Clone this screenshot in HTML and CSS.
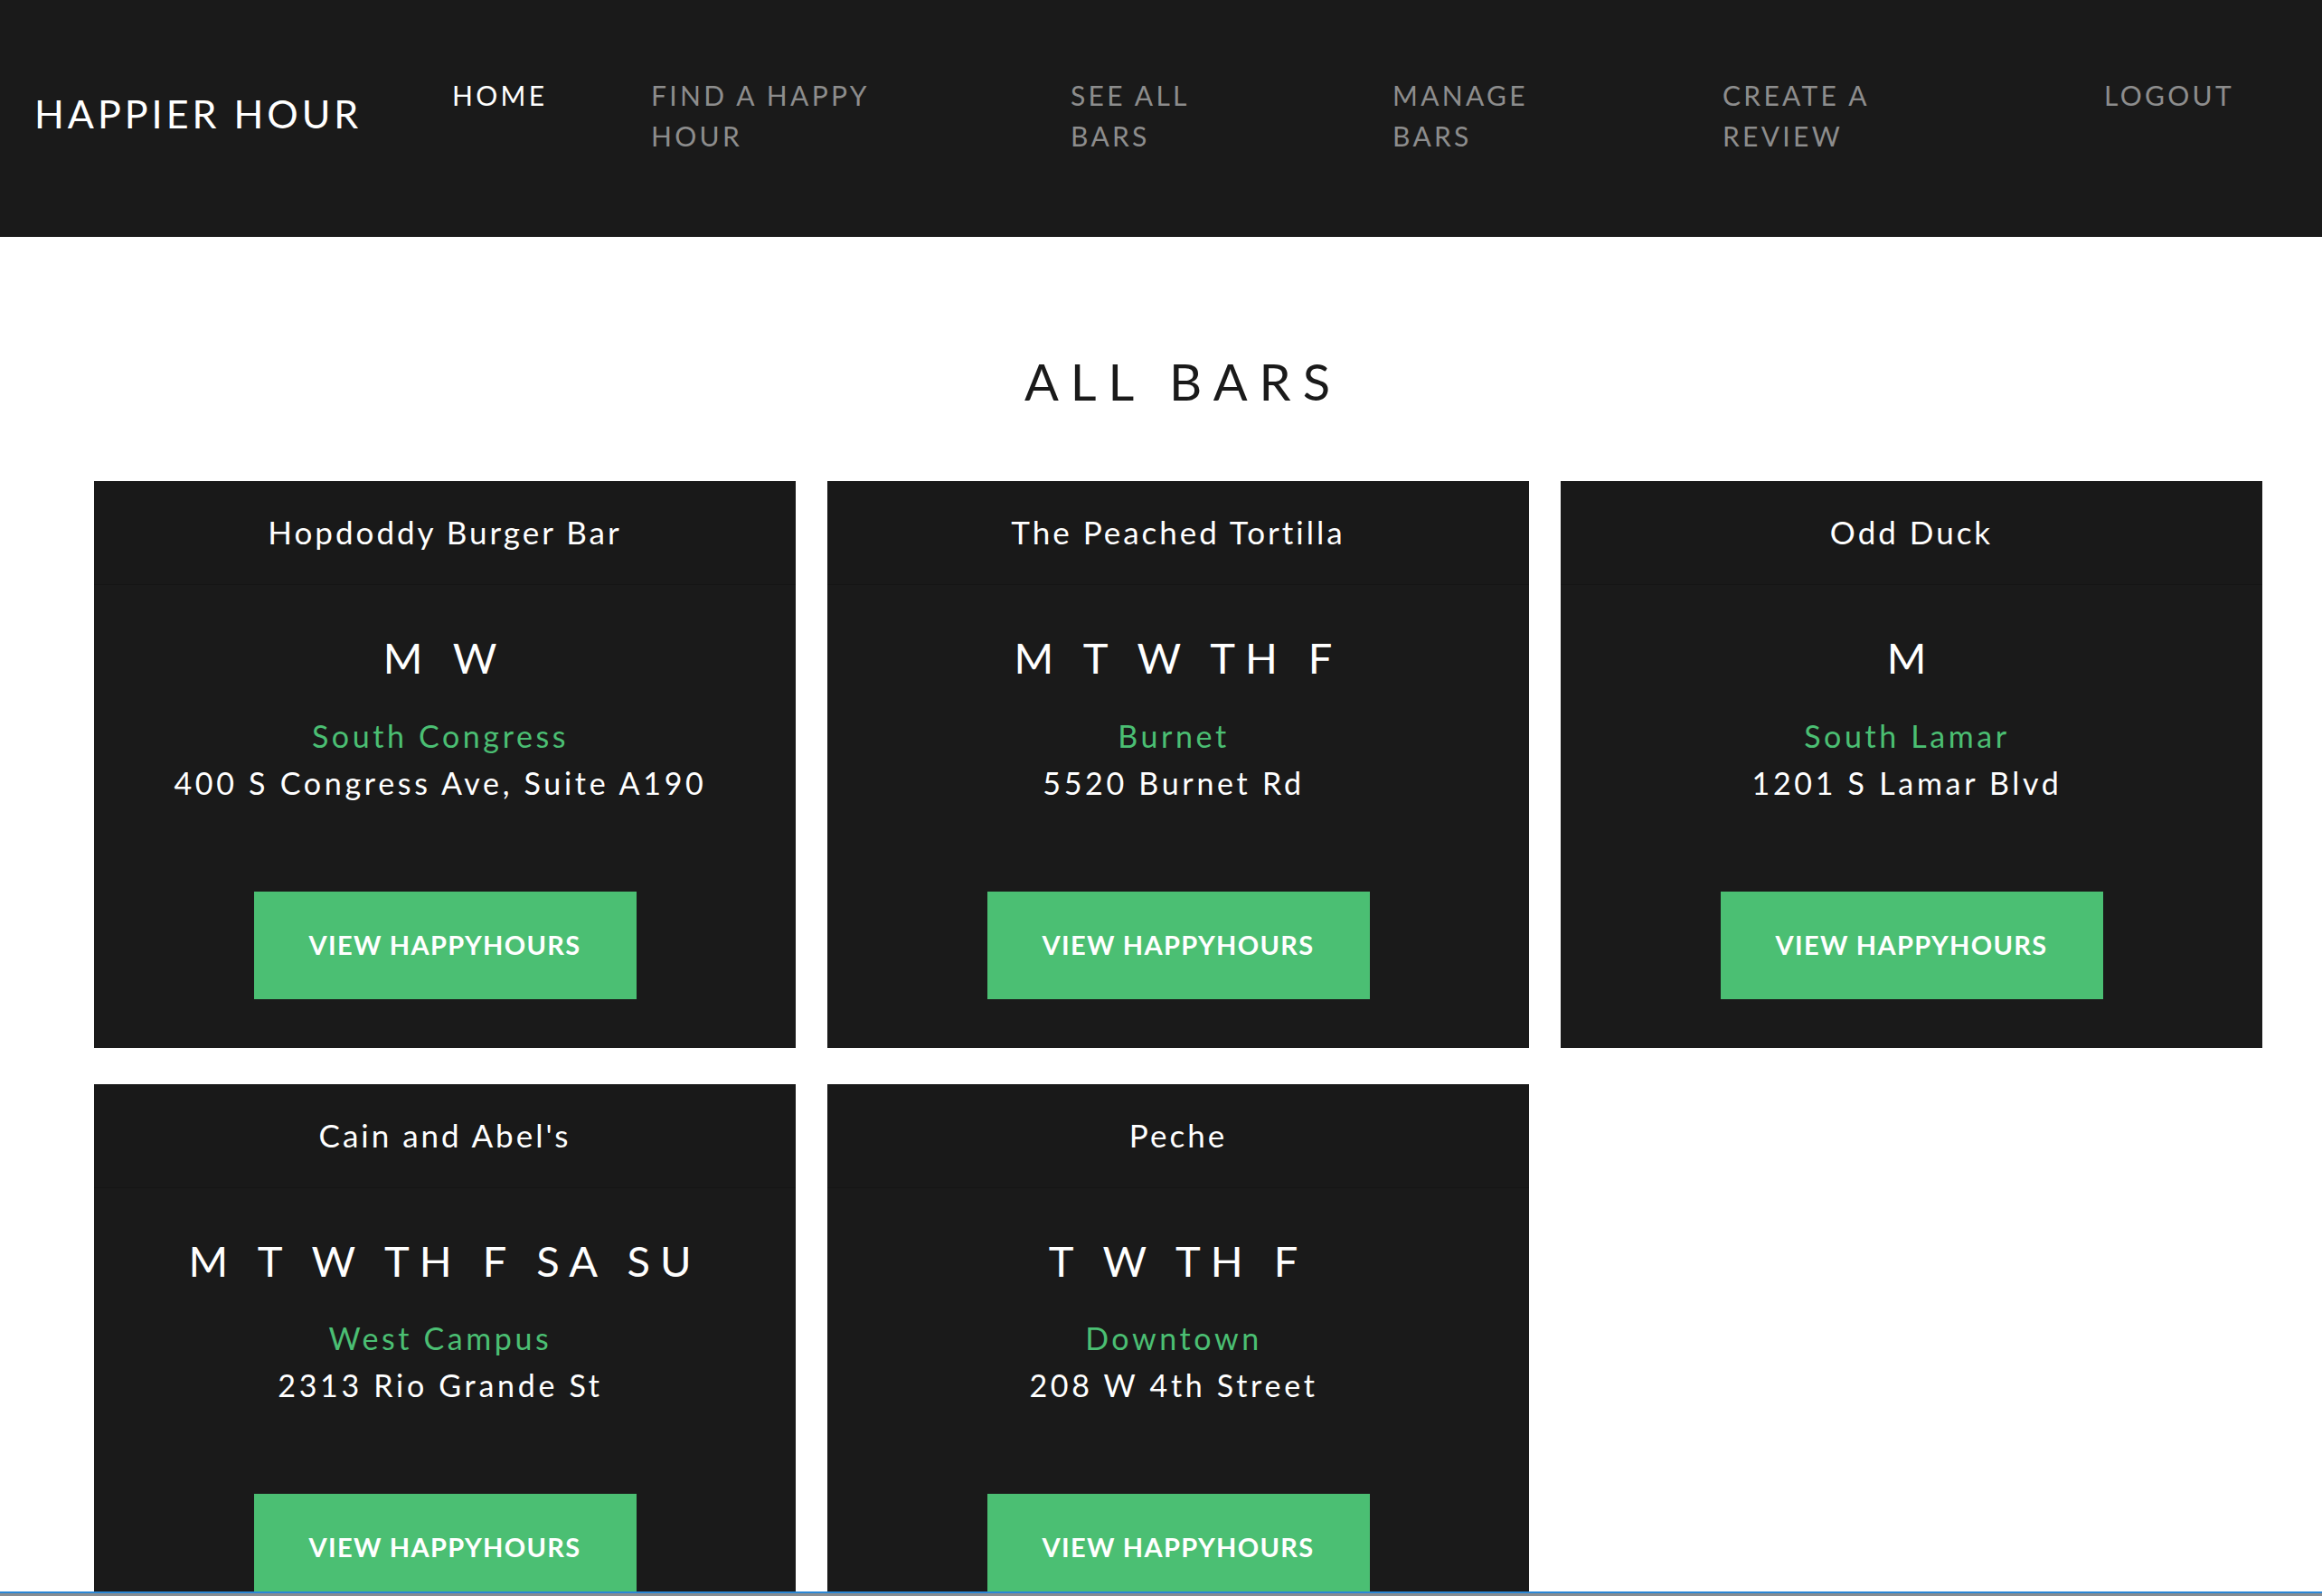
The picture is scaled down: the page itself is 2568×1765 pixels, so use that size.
FILE: index.html
```html
<!DOCTYPE html>
<html lang="en">
<head>
<meta charset="utf-8">
<title>Happier Hour - All Bars</title>
<link rel="stylesheet" href="styles.css">
</head>
<body>
<header class="navbar">
  <a class="brand" href="#">HAPPIER HOUR</a>
  <ul class="nav">
    <li class="nav-item w-home"><a class="nav-link active" href="#">HOME</a></li>
    <li class="nav-item w-find"><a class="nav-link" href="#">FIND A HAPPY<br>HOUR</a></li>
    <li class="nav-item w-see"><a class="nav-link" href="#">SEE ALL<br>BARS</a></li>
    <li class="nav-item w-manage"><a class="nav-link" href="#">MANAGE<br>BARS</a></li>
    <li class="nav-item w-create"><a class="nav-link" href="#">CREATE A<br>REVIEW</a></li>
    <li class="nav-item"><a class="nav-link" href="#">LOGOUT</a></li>
  </ul>
</header>

<main class="content">
  <h1 class="page-title">ALL BARS</h1>
  <div class="bar-grid">
    <div class="card">
      <div class="card-header">Hopdoddy Burger Bar</div>
      <div class="card-body">
        <div class="card-days">M W</div>
        <div class="card-area">South Congress</div>
        <div class="card-address">400 S Congress Ave, Suite A190</div>
        <a class="btn" href="#">VIEW HAPPYHOURS</a>
      </div>
    </div>
    <div class="card">
      <div class="card-header">The Peached Tortilla</div>
      <div class="card-body">
        <div class="card-days">M T W TH F</div>
        <div class="card-area">Burnet</div>
        <div class="card-address">5520 Burnet Rd</div>
        <a class="btn" href="#">VIEW HAPPYHOURS</a>
      </div>
    </div>
    <div class="card">
      <div class="card-header">Odd Duck</div>
      <div class="card-body">
        <div class="card-days">M</div>
        <div class="card-area">South Lamar</div>
        <div class="card-address">1201 S Lamar Blvd</div>
        <a class="btn" href="#">VIEW HAPPYHOURS</a>
      </div>
    </div>
    <div class="card">
      <div class="card-header">Cain and Abel's</div>
      <div class="card-body">
        <div class="card-days">M T W TH F SA SU</div>
        <div class="card-area">West Campus</div>
        <div class="card-address">2313 Rio Grande St</div>
        <a class="btn" href="#">VIEW HAPPYHOURS</a>
      </div>
    </div>
    <div class="card">
      <div class="card-header">Peche</div>
      <div class="card-body">
        <div class="card-days">T W TH F</div>
        <div class="card-area">Downtown</div>
        <div class="card-address">208 W 4th Street</div>
        <a class="btn" href="#">VIEW HAPPYHOURS</a>
      </div>
    </div>
  </div>
</main>
<div class="screen-edge"></div>
</body>
</html>
```

FILE: styles.css
```css
* { box-sizing: border-box; }

html, body {
  margin: 0;
  padding: 0;
  background: #ffffff;
  font-family: Lato, "Open Sans", "Liberation Sans", sans-serif;
  color: #1a1a1a;
}

a { text-decoration: none; }

/* ---------- Navbar ---------- */
.navbar {
  height: 262px;
  background: #1a1a1a;
  display: flex;
  align-items: flex-start;
  padding: 83px 0 0 38px;
}

.brand {
  color: #ffffff;
  font-size: 43px;
  line-height: 1.2;
  letter-spacing: 4px;
  margin-top: 17px;
  width: 462px;
  flex: none;
  white-space: nowrap;
}

.nav {
  list-style: none;
  margin: 0;
  padding: 0;
  display: flex;
  align-items: flex-start;
}

.nav-item { flex: none; }
.w-home { width: 220px; }
.w-find { width: 464px; }
.w-see { width: 356px; }
.w-manage { width: 365px; }
.w-create { width: 422px; }

.nav-link {
  display: block;
  color: #8d8d8d;
  font-size: 30px;
  line-height: 45px;
  letter-spacing: 3.3px;
  font-weight: 400;
  white-space: nowrap;
}

.nav-link.active { color: #ffffff; }

/* ---------- Content ---------- */
.content {
  padding: 126px 65px 0 104px;
}

.page-title {
  margin: 0 0 77px 0;
  text-align: center;
  font-size: 56px;
  line-height: 1.2;
  font-weight: 400;
  letter-spacing: 13px;
  padding-left: 10px;
  color: #1a1a1a;
}

.bar-grid {
  display: grid;
  grid-template-columns: repeat(3, 776px);
  column-gap: 35px;
  row-gap: 40px;
}

.card {
  background: #1a1a1a;
  color: #ffffff;
  display: flex;
  flex-direction: column;
}

.card-header {
  background: #191919;
  border-bottom: 1px solid #151515;
  padding: 35px 20px 37px;
  text-align: center;
  font-size: 35px;
  line-height: 1.2;
  letter-spacing: 3px;
}

.card-body {
  padding: 52px 20px 54px;
  display: flex;
  flex-direction: column;
  align-items: center;
  text-align: center;
}

.card-days {
  font-size: 47px;
  line-height: 1.2;
  letter-spacing: 11px;
  margin-bottom: 32px;
}

.card-area {
  color: #4bbf73;
  font-size: 34px;
  line-height: 52px;
  letter-spacing: 3.6px;
  padding-right: 10px;
}

.card-address {
  font-size: 34px;
  line-height: 52px;
  letter-spacing: 3.7px;
  padding-right: 10px;
}

.btn {
  margin-top: 94px;
  width: 423px;
  height: 119px;
  background: #4bbf73;
  color: #ffffff;
  display: flex;
  align-items: center;
  justify-content: center;
  font-size: 29px;
  line-height: 1.2;
  font-weight: 700;
  letter-spacing: 1.3px;
}

.screen-edge {
  position: fixed;
  left: 0;
  right: 0;
  bottom: 0;
  height: 5px;
  background: #878c91;
  border-top: 2px solid #2b87d6;
}
```
